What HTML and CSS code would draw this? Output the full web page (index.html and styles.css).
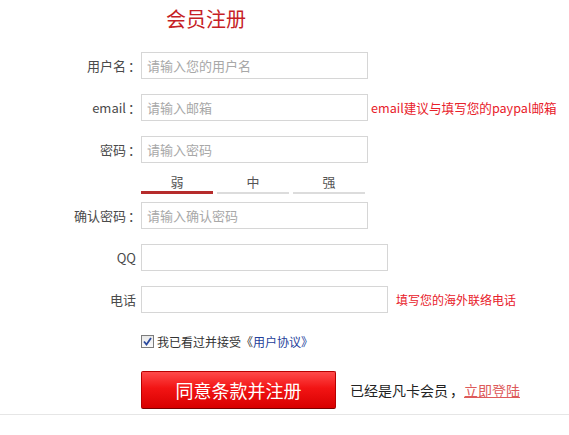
FILE: index.html
```html
<!DOCTYPE html>
<html lang="zh-CN">
<head>
<meta charset="utf-8">
<title>会员注册</title>
<link rel="stylesheet" href="styles.css">
</head>
<body>
<div class="page">
  <h1 class="title">会员注册</h1>
  <form class="form">
    <div class="row">
      <label class="label">用户名<span class="colon">：</span></label>
      <input class="field" type="text" placeholder="请输入您的用户名">
    </div>
    <div class="row">
      <label class="label">email<span class="colon">：</span></label>
      <input class="field" type="text" placeholder="请输入邮箱">
      <span class="hint hint-email">email建议与填写您的paypal邮箱</span>
    </div>
    <div class="row">
      <label class="label">密码<span class="colon">：</span></label>
      <input class="field" type="password" placeholder="请输入密码">
    </div>
    <div class="strength">
      <div class="seg active"><span class="seg-text">弱</span><span class="seg-bar"></span></div>
      <div class="seg"><span class="seg-text">中</span><span class="seg-bar"></span></div>
      <div class="seg"><span class="seg-text">强</span><span class="seg-bar"></span></div>
    </div>
    <div class="row">
      <label class="label">确认密码<span class="colon">：</span></label>
      <input class="field" type="password" placeholder="请输入确认密码">
    </div>
    <div class="row">
      <label class="label label-plain">QQ</label>
      <input class="field field-wide" type="text">
    </div>
    <div class="row">
      <label class="label label-plain">电话</label>
      <input class="field field-wide" type="text">
      <span class="hint hint-phone">填写您的海外联络电话</span>
    </div>
    <div class="agree">
      <span class="checkbox"><svg width="11" height="11" viewBox="0 0 11 11"><path d="M2 5.5 L4.5 8.5 L9 2" fill="none" stroke="#2b4a9e" stroke-width="1.8"/></svg></span>
      <span class="agree-text">我已看过并接受《<a class="agree-link" href="#">用户协议》</a></span>
    </div>
    <div class="submit-row">
      <button class="submit" type="button">同意条款并注册</button>
      <span class="login-text">已经是凡卡会员<span class="comma">，</span><a class="login-link" href="#">立即登陆</a></span>
    </div>
  </form>
  <div class="divider"></div>
</div>
</body>
</html>
```
FILE: styles.css
```css
html, body {
  margin: 0;
  padding: 0;
  background: #fff;
}
body {
  font-family: "Noto Sans CJK SC", "Microsoft YaHei", sans-serif;
  color: #444;
  width: 569px;
  height: 435px;
  overflow: hidden;
}
.page {
  padding-top: 5px;
}
.title {
  margin: 0;
  padding-left: 166px;
  font-size: 20px;
  line-height: 28px;
  font-weight: normal;
  color: #c61f26;
}
.form {
  margin: 19px 0 0 0;
}
.row {
  display: flex;
  align-items: center;
  height: 27px;
  margin-bottom: 15px;
}
.label {
  width: 141px;
  flex: none;
  box-sizing: border-box;
  text-align: right;
  font-size: 13px;
  color: #4a4a4a;
}
.colon {
  margin-left: 2px;
}
.label-plain {
  padding-right: 5px;
}
.field {
  box-sizing: border-box;
  width: 227px;
  height: 27px;
  border: 1px solid #d6d6d6;
  padding: 0 5px;
  font-family: inherit;
  font-size: 13px;
  color: #333;
  outline: none;
  margin: 0;
  background: #fff;
}
.field::placeholder {
  color: #a8a8a8;
}
.field-wide {
  width: 247px;
}
.hint {
  color: #e8202a;
  font-size: 12px;
  white-space: nowrap;
}
.hint-email {
  margin-left: 3px;
  font-size: 12.6px;
}
.hint-phone {
  margin-left: 8px;
}
.strength {
  display: flex;
  gap: 4px;
  padding-left: 141px;
  height: 39px;
  margin-top: -15px;
  box-sizing: border-box;
  padding-top: 10px;
}
.seg {
  width: 72px;
  display: flex;
  flex-direction: column;
  align-items: center;
}
.seg-text {
  font-size: 13px;
  line-height: 18px;
  color: #555;
}
.seg-bar {
  display: block;
  width: 100%;
  height: 2px;
  margin-top: 1px;
  background: #dcdcdc;
}
.seg.active .seg-bar {
  height: 3px;
  margin-top: 0;
  background: #b62c2c;
}
.agree {
  display: flex;
  align-items: center;
  padding-left: 141px;
  height: 20px;
  margin-top: 18px;
}
.checkbox {
  box-sizing: border-box;
  width: 13px;
  height: 13px;
  border: 1px solid #7c7c7c;
  background: linear-gradient(#e8e8e8, #fafafa);
  display: flex;
  align-items: center;
  justify-content: center;
  flex: none;
}
.agree-text {
  margin-left: 3px;
  font-size: 12px;
  color: #333;
}
.agree-link {
  color: #23409a;
  text-decoration: none;
}
.submit-row {
  display: flex;
  align-items: center;
  padding-left: 141px;
  margin-top: 20px;
}
.submit {
  box-sizing: border-box;
  width: 195px;
  height: 38px;
  border: 1px solid #b80000;
  border-bottom-color: #7a0000;
  border-radius: 2px;
  background: linear-gradient(#ff4a4a, #f21414 45%, #d80000);
  color: #fff;
  font-family: inherit;
  font-size: 18px;
  padding: 0;
  cursor: pointer;
}
.login-text {
  margin-left: 14px;
  font-size: 14px;
  color: #222;
}
.comma {
  margin-left: 2px;
}
.login-link {
  color: #dd5a5a;
  text-decoration: underline;
}
.divider {
  margin-top: 5px;
  border-top: 1px solid #e6e6e6;
}
```
